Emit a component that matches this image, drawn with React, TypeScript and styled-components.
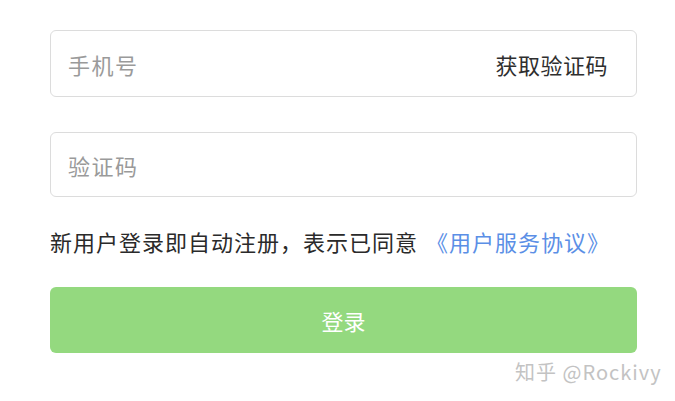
import styled, { createGlobalStyle } from 'styled-components';

const GlobalStyle = createGlobalStyle`
  html, body {
    margin: 0;
    padding: 0;
    background: #ffffff;
  }

  body {
    font-family: 'Noto Sans CJK SC', 'Noto Sans', sans-serif;
  }
`;

const Page = styled.div`
  position: relative;
  width: 675px;
  height: 401px;
  overflow: hidden;
`;

const Form = styled.form`
  width: 587px;
  padding: 30px 0 0 50px;

  display: flex;
  flex-direction: column;
`;

const Field = styled.label<{ gapTop?: number; h?: number }>`
  box-sizing: border-box;
  height: ${(props) => props.h || 66}px;
  margin-top: ${(props) => props.gapTop || 0}px;
  padding: 0 28px 0 17px;

  display: flex;
  align-items: center;
  justify-content: space-between;

  border: 1px solid #dcdcdc;
  border-radius: 6px;
  background: #ffffff;
`;

const Input = styled.input`
  flex: 1;
  min-width: 0;
  border: none;
  outline: none;
  padding: 0;
  background: transparent;

  font-family: inherit;
  font-size: 22px;
  letter-spacing: 1.5px;
  color: #333333;

  &::placeholder {
    color: #9a9a9a;
  }
`;

const CodeLink = styled.span`
  color: #2f2f2f;
  font-size: 22px;
  letter-spacing: 0.5px;
  white-space: nowrap;
  cursor: pointer;
`;

const Agreement = styled.p`
  margin: 29px 0 0;
  line-height: 30px;
  font-size: 22px;
  letter-spacing: 1px;
  color: #2a2a2a;
  white-space: nowrap;
`;

const Link = styled.a`
  margin-left: 8px;
  color: #5b8fe6;
  text-decoration: none;
`;

const Submit = styled.button`
  height: 66px;
  margin-top: 31px;
  border: none;
  border-radius: 6px;
  background: #94d97f;

  font-family: inherit;
  font-size: 22px;
  color: #ffffff;
`;

const Watermark = styled.span`
  position: absolute;
  left: 515px;
  top: 357px;
  font-size: 20px;
  color: #c3c3c3;
  letter-spacing: 1px;
`;

export default function App() {
  return (
    <Page>
      <GlobalStyle />
      <Form onSubmit={(e) => e.preventDefault()}>
        <Field h={67}>
          <Input placeholder="手机号" />
          <CodeLink>获取验证码</CodeLink>
        </Field>
        <Field gapTop={35} h={65}>
          <Input placeholder="验证码" />
        </Field>
        <Agreement>
          新用户登录即自动注册，表示已同意
          <Link href="#">《用户服务协议》</Link>
        </Agreement>
        <Submit type="submit">登录</Submit>
      </Form>
      <Watermark>知乎 @Rockivy</Watermark>
    </Page>
  );
}
